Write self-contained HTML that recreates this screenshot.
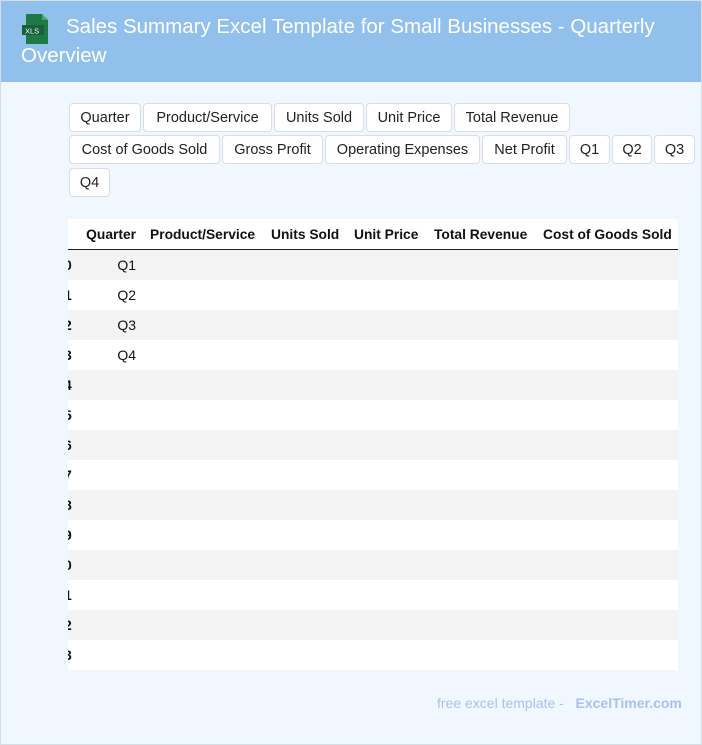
<!DOCTYPE html>
<html><head><meta charset="utf-8"><style>
*{box-sizing:border-box;margin:0;padding:0}
body{width:702px;height:745px;background:#f0f7ff;font-family:"Liberation Sans",sans-serif;position:relative;overflow:hidden}
.frame{position:absolute;left:0;top:0;width:702px;height:745px;border:1px solid #d5dde6;pointer-events:none}
.hdr{position:absolute;left:0;top:0;width:702px;height:82px;background:#91c0ec}
.t{position:absolute;color:#fff;font-size:20.5px;white-space:nowrap}
.b{position:absolute;height:29px;border:1px solid #d8dde3;border-radius:4px;background:#fff;font-size:14.5px;color:#222;text-align:center;line-height:29px;white-space:nowrap}
.tbl{position:absolute;left:68px;top:219px;width:610px;height:451px;background:#fff;overflow:hidden}
.th{position:absolute;top:0;height:31px;line-height:31px;font-weight:bold;font-size:13.8px;color:#111;white-space:nowrap}
.r{position:absolute;left:0;width:610px;height:30px;font-size:14px;line-height:30px;color:#111}
.r.g{background:#f3f3f3}
.i{position:absolute;left:-4px;font-weight:bold}
.q{position:absolute;right:542px}
</style></head><body>
<div class="hdr">
<svg style="position:absolute;left:22px;top:14px" width="28" height="30" viewBox="0 0 28 30"><path d="M4 0h16l6 6v24H4z" fill="#1e7a45"/><path d="M20 0l6 6h-6z" fill="#4fa36f"/><rect x="0" y="11" width="22" height="10" fill="#16613a"/><text x="3" y="19.5" font-size="7.5" fill="#fff" font-family="Liberation Sans">XLS</text></svg>
<div class="t" style="left:66px;top:15px">Sales Summary Excel Template for Small Businesses - Quarterly</div>
<div class="t" style="left:21px;top:44px">Overview</div>
</div>
<div class="b" style="left:69px;top:103px;width:72px">Quarter</div>
<div class="b" style="left:143px;top:103px;width:129px">Product/Service</div>
<div class="b" style="left:274px;top:103px;width:90px">Units Sold</div>
<div class="b" style="left:366px;top:103px;width:86px">Unit Price</div>
<div class="b" style="left:454px;top:103px;width:116px">Total Revenue</div>
<div class="b" style="left:69px;top:135px;width:151px">Cost of Goods Sold</div>
<div class="b" style="left:222px;top:135px;width:101px">Gross Profit</div>
<div class="b" style="left:325px;top:135px;width:155px">Operating Expenses</div>
<div class="b" style="left:482px;top:135px;width:85px">Net Profit</div>
<div class="b" style="left:569px;top:135px;width:41px">Q1</div>
<div class="b" style="left:612px;top:135px;width:40px">Q2</div>
<div class="b" style="left:654px;top:135px;width:41px">Q3</div>
<div class="b" style="left:69px;top:168px;width:41px">Q4</div>
<div class="tbl">
<div class="th" style="right:542px">Quarter</div>
<div class="th" style="left:82px">Product/Service</div>
<div class="th" style="left:203px">Units Sold</div>
<div class="th" style="left:286px">Unit Price</div>
<div class="th" style="left:366px">Total Revenue</div>
<div class="th" style="left:475px">Cost of Goods Sold</div>
<div style="position:absolute;left:0;top:30px;width:610px;height:1px;background:#222"></div>
<div class="r g" style="top:31px"><span class="i">0</span><span class="q">Q1</span></div>
<div class="r" style="top:61px"><span class="i">1</span><span class="q">Q2</span></div>
<div class="r g" style="top:91px"><span class="i">2</span><span class="q">Q3</span></div>
<div class="r" style="top:121px"><span class="i">3</span><span class="q">Q4</span></div>
<div class="r g" style="top:151px"><span class="i">4</span></div>
<div class="r" style="top:181px"><span class="i">5</span></div>
<div class="r g" style="top:211px"><span class="i">6</span></div>
<div class="r" style="top:241px"><span class="i">7</span></div>
<div class="r g" style="top:271px"><span class="i">8</span></div>
<div class="r" style="top:301px"><span class="i">9</span></div>
<div class="r g" style="top:331px"><span class="i">0</span></div>
<div class="r" style="top:361px"><span class="i">1</span></div>
<div class="r g" style="top:391px"><span class="i">2</span></div>
<div class="r" style="top:421px"><span class="i">3</span></div>
</div>
<div style="position:absolute;left:437px;top:695px;font-size:14px;color:#aac0ee;white-space:nowrap">free excel template - &nbsp;&nbsp;<b>ExcelTimer.com</b></div>
<div class="frame"></div>
</body></html>
